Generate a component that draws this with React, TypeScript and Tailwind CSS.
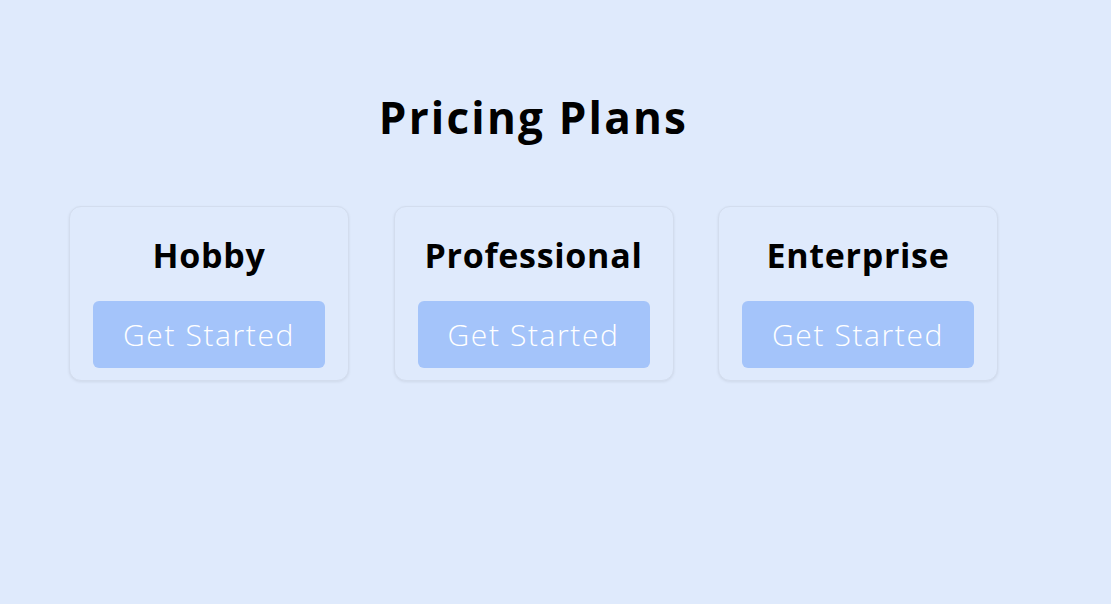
const plans = ["Hobby", "Professional", "Enterprise"];

export default function App() {
  return (
    <div
      className="min-h-screen bg-[#dfeafc] pt-[88px]"
      style={{ fontFamily: '"Open Sans", "Noto Sans", sans-serif' }}
    >
      <div className="ml-[69px] w-[929px]">
        <h1 className="text-center text-[44px] font-bold leading-[58px] tracking-[2.2px] text-black">
          Pricing Plans
        </h1>
        <div className="mt-[60px] flex gap-[44.5px]">
          {plans.map((name) => (
            <div
              key={name}
              className="w-[280px] rounded-xl border border-[#d3ddee] bg-[#dfeafc] px-[23px] pb-[12px] pt-6 shadow-[0_1px_3px_rgba(0,0,0,0.08)]"
            >
              <h2 className="mb-[22px] text-center text-[34px] font-bold leading-[48px] tracking-[0.7px] text-black">
                {name}
              </h2>
              <button className="h-[67px] w-full rounded-md bg-[#a4c4fa] text-[30px] font-light tracking-[1.6px] text-white">
                Get Started
              </button>
            </div>
          ))}
        </div>
      </div>
    </div>
  );
}
